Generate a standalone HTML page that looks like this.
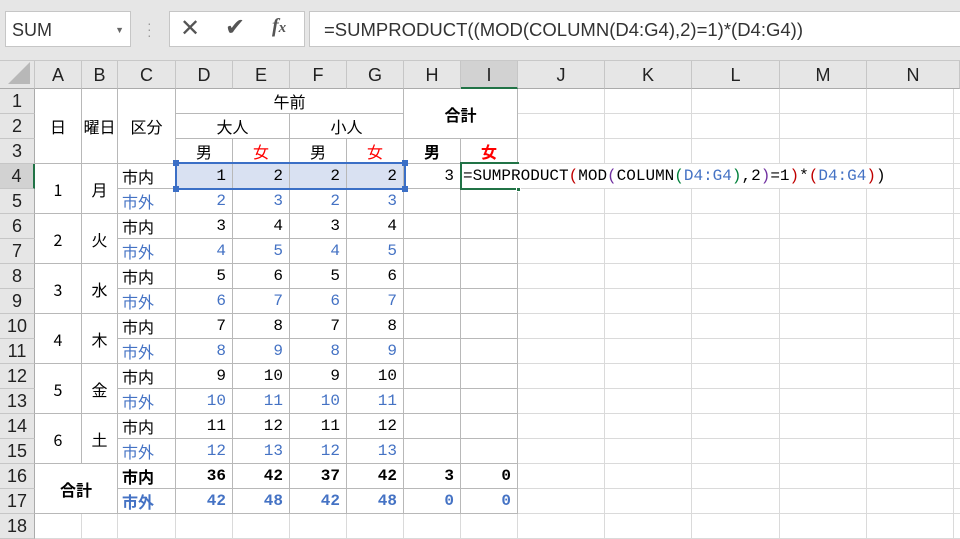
<!DOCTYPE html>
<html><head><meta charset="utf-8"><style>
*{box-sizing:border-box;margin:0;padding:0}
html,body{width:960px;height:539px;overflow:hidden}
body{background:#fff;position:relative;font-family:"Liberation Sans","Noto Sans CJK JP",sans-serif;}
.a{position:absolute}
.top{left:0;top:0;width:960px;height:61px;background:#e6e6e6;border-bottom:1px solid #c8c8c8}
.box{background:#fff;border:1px solid #c6c6c6}
.ch{position:absolute;top:61px;height:28px;background:#e6e6e6;border-right:1px solid #c6c6c6;border-bottom:1px solid #ababab;font-size:18px;color:#222;text-align:center;line-height:28px}
.rh{position:absolute;left:0;width:35px;height:25px;background:#e6e6e6;border-right:1px solid #ababab;border-bottom:1px solid #c6c6c6;font-size:18px;color:#222;text-align:center;line-height:25px}
.vl{position:absolute;top:89px;width:1px;height:450px;background:#dadada}
.vs{position:absolute;top:514px;width:1px;height:25px;background:#dadada}
.hl{position:absolute;left:35px;height:1px;width:925px;background:#dadada}
.c{position:absolute;background:#fff;border-right:1px solid #b8b8b8;border-bottom:1px solid #b8b8b8;font-family:"Noto Sans CJK JP",sans-serif;font-size:16px;line-height:24px;color:#000;white-space:nowrap}
.r{font-family:"Liberation Mono","Noto Sans CJK JP",monospace;font-size:16px}
.ctr{text-align:center}.r{text-align:right;padding-right:6px}.l{padding-left:4px}
.b{color:#4472c4}.red{color:#f00}.bd{font-weight:bold}
.sel{background:#d9e1f2}
</style></head><body>
<div class="a top"></div>
<div class="a box" style="left:5px;top:11px;width:126px;height:36px;font-size:18px;line-height:36px;padding-left:6px;color:#333">SUM<span style="position:absolute;right:6px;top:0;font-size:9px;color:#666">▼</span></div>
<div class="a" style="left:147px;top:20px;color:#999;font-size:14px;line-height:6px">·<br>·<br>·</div>
<div class="a box" style="left:169px;top:11px;width:136px;height:36px"></div>
<div class="a" style="left:180px;top:14px;font-size:24px;color:#555">✕</div>
<div class="a" style="left:225px;top:13px;font-size:24px;color:#555">✔</div>
<div class="a" style="left:272px;top:15px;font-size:20px;color:#555;font-family:'Liberation Serif',serif;font-style:italic;font-weight:bold">f<span style="font-size:15px">x</span></div>
<div class="a box" style="left:309px;top:11px;width:651px;height:36px;border-right:none;font-size:18.5px;line-height:35px;padding-left:14px;color:#333">=SUMPRODUCT((MOD(COLUMN(D4:G4),2)=1)*(D4:G4))</div>

<div class="ch" style="left:0;width:35px;background:#e6e6e6"><div class="a" style="right:4px;bottom:4px;width:0;height:0;border-left:22px solid transparent;border-bottom:22px solid #b8b8b8"></div></div>
<div class="ch" style="left:35px;width:47px">A</div>
<div class="ch" style="left:82px;width:36px">B</div>
<div class="ch" style="left:118px;width:58px">C</div>
<div class="ch" style="left:176px;width:57px">D</div>
<div class="ch" style="left:233px;width:57px">E</div>
<div class="ch" style="left:290px;width:57px">F</div>
<div class="ch" style="left:347px;width:57px">G</div>
<div class="ch" style="left:404px;width:57px">H</div>
<div class="ch" style="left:461px;width:57px;background:#d2d2d2;border-bottom:2px solid #217346">I</div>
<div class="ch" style="left:518px;width:87px">J</div>
<div class="ch" style="left:605px;width:87px">K</div>
<div class="ch" style="left:692px;width:88px">L</div>
<div class="ch" style="left:780px;width:87px">M</div>
<div class="ch" style="left:867px;width:93px">N</div>

<div class="rh" style="top:89px">1</div><div class="rh" style="top:114px">2</div><div class="rh" style="top:139px">3</div>
<div class="rh" style="top:164px;background:#d2d2d2;border-right:2px solid #217346">4</div><div class="rh" style="top:189px">5</div><div class="rh" style="top:214px">6</div>
<div class="rh" style="top:239px">7</div><div class="rh" style="top:264px">8</div><div class="rh" style="top:289px">9</div>
<div class="rh" style="top:314px">10</div><div class="rh" style="top:339px">11</div><div class="rh" style="top:364px">12</div>
<div class="rh" style="top:389px">13</div><div class="rh" style="top:414px">14</div><div class="rh" style="top:439px">15</div>
<div class="rh" style="top:464px">16</div><div class="rh" style="top:489px">17</div><div class="rh" style="top:514px">18</div>

<div class="vl" style="left:604px"></div><div class="vl" style="left:691px"></div><div class="vl" style="left:779px"></div><div class="vl" style="left:866px"></div><div class="vl" style="left:953px"></div><div class="vl" style="left:517px"></div>
<div class="vs" style="left:81px"></div><div class="vs" style="left:117px"></div><div class="vs" style="left:175px"></div><div class="vs" style="left:232px"></div><div class="vs" style="left:289px"></div><div class="vs" style="left:346px"></div><div class="vs" style="left:403px"></div><div class="vs" style="left:460px"></div>
<div class="hl" style="top:113px"></div><div class="hl" style="top:138px"></div><div class="hl" style="top:163px"></div><div class="hl" style="top:188px"></div><div class="hl" style="top:213px"></div><div class="hl" style="top:238px"></div><div class="hl" style="top:263px"></div><div class="hl" style="top:288px"></div><div class="hl" style="top:313px"></div><div class="hl" style="top:338px"></div><div class="hl" style="top:363px"></div><div class="hl" style="top:388px"></div><div class="hl" style="top:413px"></div><div class="hl" style="top:438px"></div><div class="hl" style="top:463px"></div><div class="hl" style="top:488px"></div><div class="hl" style="top:513px"></div><div class="hl" style="top:538px"></div>

<div class="c ctr" style="left:35px;top:89px;width:47px;height:75px;line-height:75px">日</div>
<div class="c ctr" style="left:82px;top:89px;width:36px;height:75px;line-height:75px">曜日</div>
<div class="c ctr" style="left:118px;top:89px;width:58px;height:75px;line-height:75px">区分</div>
<div class="c ctr" style="left:176px;top:89px;width:228px;height:25px">午前</div>
<div class="c ctr" style="left:176px;top:114px;width:114px;height:25px">大人</div>
<div class="c ctr" style="left:290px;top:114px;width:114px;height:25px">小人</div>
<div class="c ctr bd" style="left:404px;top:89px;width:114px;height:50px;line-height:50px">合計</div>
<div class="c ctr" style="left:176px;top:139px;width:57px;height:25px">男</div>
<div class="c ctr red" style="left:233px;top:139px;width:57px;height:25px">女</div>
<div class="c ctr" style="left:290px;top:139px;width:57px;height:25px">男</div>
<div class="c ctr red" style="left:347px;top:139px;width:57px;height:25px">女</div>
<div class="c ctr bd" style="left:404px;top:139px;width:57px;height:25px">男</div>
<div class="c ctr red bd" style="left:461px;top:139px;width:57px;height:25px">女</div>

<div class="c ctr" style="left:35px;top:164px;width:47px;height:50px;line-height:50px">1</div><div class="c ctr" style="left:82px;top:164px;width:36px;height:50px;line-height:50px">月</div>
<div class="c ctr" style="left:35px;top:214px;width:47px;height:50px;line-height:50px">2</div><div class="c ctr" style="left:82px;top:214px;width:36px;height:50px;line-height:50px">火</div>
<div class="c ctr" style="left:35px;top:264px;width:47px;height:50px;line-height:50px">3</div><div class="c ctr" style="left:82px;top:264px;width:36px;height:50px;line-height:50px">水</div>
<div class="c ctr" style="left:35px;top:314px;width:47px;height:50px;line-height:50px">4</div><div class="c ctr" style="left:82px;top:314px;width:36px;height:50px;line-height:50px">木</div>
<div class="c ctr" style="left:35px;top:364px;width:47px;height:50px;line-height:50px">5</div><div class="c ctr" style="left:82px;top:364px;width:36px;height:50px;line-height:50px">金</div>
<div class="c ctr" style="left:35px;top:414px;width:47px;height:50px;line-height:50px">6</div><div class="c ctr" style="left:82px;top:414px;width:36px;height:50px;line-height:50px">土</div>
<div class="c ctr bd" style="left:35px;top:464px;width:83px;height:50px;line-height:50px">合計</div>

<div class="c l" style="left:118px;top:164px;width:58px;height:25px">市内</div><div class="c r sel" style="left:176px;top:164px;width:57px;height:25px">1</div><div class="c r sel" style="left:233px;top:164px;width:57px;height:25px">2</div><div class="c r sel" style="left:290px;top:164px;width:57px;height:25px">2</div><div class="c r sel" style="left:347px;top:164px;width:57px;height:25px">2</div><div class="c r" style="left:404px;top:164px;width:57px;height:25px">3</div><div class="c" style="left:461px;top:164px;width:57px;height:25px"></div>
<div class="c l b" style="left:118px;top:189px;width:58px;height:25px">市外</div><div class="c r b" style="left:176px;top:189px;width:57px;height:25px">2</div><div class="c r b" style="left:233px;top:189px;width:57px;height:25px">3</div><div class="c r b" style="left:290px;top:189px;width:57px;height:25px">2</div><div class="c r b" style="left:347px;top:189px;width:57px;height:25px">3</div><div class="c" style="left:404px;top:189px;width:57px;height:25px"></div><div class="c" style="left:461px;top:189px;width:57px;height:25px"></div>

<div class="c l" style="left:118px;top:214px;width:58px;height:25px">市内</div><div class="c r" style="left:176px;top:214px;width:57px;height:25px">3</div><div class="c r" style="left:233px;top:214px;width:57px;height:25px">4</div><div class="c r" style="left:290px;top:214px;width:57px;height:25px">3</div><div class="c r" style="left:347px;top:214px;width:57px;height:25px">4</div><div class="c" style="left:404px;top:214px;width:57px;height:25px"></div><div class="c" style="left:461px;top:214px;width:57px;height:25px"></div>
<div class="c l b" style="left:118px;top:239px;width:58px;height:25px">市外</div><div class="c r b" style="left:176px;top:239px;width:57px;height:25px">4</div><div class="c r b" style="left:233px;top:239px;width:57px;height:25px">5</div><div class="c r b" style="left:290px;top:239px;width:57px;height:25px">4</div><div class="c r b" style="left:347px;top:239px;width:57px;height:25px">5</div><div class="c" style="left:404px;top:239px;width:57px;height:25px"></div><div class="c" style="left:461px;top:239px;width:57px;height:25px"></div>

<div class="c l" style="left:118px;top:264px;width:58px;height:25px">市内</div><div class="c r" style="left:176px;top:264px;width:57px;height:25px">5</div><div class="c r" style="left:233px;top:264px;width:57px;height:25px">6</div><div class="c r" style="left:290px;top:264px;width:57px;height:25px">5</div><div class="c r" style="left:347px;top:264px;width:57px;height:25px">6</div><div class="c" style="left:404px;top:264px;width:57px;height:25px"></div><div class="c" style="left:461px;top:264px;width:57px;height:25px"></div>
<div class="c l b" style="left:118px;top:289px;width:58px;height:25px">市外</div><div class="c r b" style="left:176px;top:289px;width:57px;height:25px">6</div><div class="c r b" style="left:233px;top:289px;width:57px;height:25px">7</div><div class="c r b" style="left:290px;top:289px;width:57px;height:25px">6</div><div class="c r b" style="left:347px;top:289px;width:57px;height:25px">7</div><div class="c" style="left:404px;top:289px;width:57px;height:25px"></div><div class="c" style="left:461px;top:289px;width:57px;height:25px"></div>

<div class="c l" style="left:118px;top:314px;width:58px;height:25px">市内</div><div class="c r" style="left:176px;top:314px;width:57px;height:25px">7</div><div class="c r" style="left:233px;top:314px;width:57px;height:25px">8</div><div class="c r" style="left:290px;top:314px;width:57px;height:25px">7</div><div class="c r" style="left:347px;top:314px;width:57px;height:25px">8</div><div class="c" style="left:404px;top:314px;width:57px;height:25px"></div><div class="c" style="left:461px;top:314px;width:57px;height:25px"></div>
<div class="c l b" style="left:118px;top:339px;width:58px;height:25px">市外</div><div class="c r b" style="left:176px;top:339px;width:57px;height:25px">8</div><div class="c r b" style="left:233px;top:339px;width:57px;height:25px">9</div><div class="c r b" style="left:290px;top:339px;width:57px;height:25px">8</div><div class="c r b" style="left:347px;top:339px;width:57px;height:25px">9</div><div class="c" style="left:404px;top:339px;width:57px;height:25px"></div><div class="c" style="left:461px;top:339px;width:57px;height:25px"></div>

<div class="c l" style="left:118px;top:364px;width:58px;height:25px">市内</div><div class="c r" style="left:176px;top:364px;width:57px;height:25px">9</div><div class="c r" style="left:233px;top:364px;width:57px;height:25px">10</div><div class="c r" style="left:290px;top:364px;width:57px;height:25px">9</div><div class="c r" style="left:347px;top:364px;width:57px;height:25px">10</div><div class="c" style="left:404px;top:364px;width:57px;height:25px"></div><div class="c" style="left:461px;top:364px;width:57px;height:25px"></div>
<div class="c l b" style="left:118px;top:389px;width:58px;height:25px">市外</div><div class="c r b" style="left:176px;top:389px;width:57px;height:25px">10</div><div class="c r b" style="left:233px;top:389px;width:57px;height:25px">11</div><div class="c r b" style="left:290px;top:389px;width:57px;height:25px">10</div><div class="c r b" style="left:347px;top:389px;width:57px;height:25px">11</div><div class="c" style="left:404px;top:389px;width:57px;height:25px"></div><div class="c" style="left:461px;top:389px;width:57px;height:25px"></div>

<div class="c l" style="left:118px;top:414px;width:58px;height:25px">市内</div><div class="c r" style="left:176px;top:414px;width:57px;height:25px">11</div><div class="c r" style="left:233px;top:414px;width:57px;height:25px">12</div><div class="c r" style="left:290px;top:414px;width:57px;height:25px">11</div><div class="c r" style="left:347px;top:414px;width:57px;height:25px">12</div><div class="c" style="left:404px;top:414px;width:57px;height:25px"></div><div class="c" style="left:461px;top:414px;width:57px;height:25px"></div>
<div class="c l b" style="left:118px;top:439px;width:58px;height:25px">市外</div><div class="c r b" style="left:176px;top:439px;width:57px;height:25px">12</div><div class="c r b" style="left:233px;top:439px;width:57px;height:25px">13</div><div class="c r b" style="left:290px;top:439px;width:57px;height:25px">12</div><div class="c r b" style="left:347px;top:439px;width:57px;height:25px">13</div><div class="c" style="left:404px;top:439px;width:57px;height:25px"></div><div class="c" style="left:461px;top:439px;width:57px;height:25px"></div>

<div class="c l bd" style="left:118px;top:464px;width:58px;height:25px">市内</div><div class="c r bd" style="left:176px;top:464px;width:57px;height:25px">36</div><div class="c r bd" style="left:233px;top:464px;width:57px;height:25px">42</div><div class="c r bd" style="left:290px;top:464px;width:57px;height:25px">37</div><div class="c r bd" style="left:347px;top:464px;width:57px;height:25px">42</div><div class="c r bd" style="left:404px;top:464px;width:57px;height:25px">3</div><div class="c r bd" style="left:461px;top:464px;width:57px;height:25px">0</div>
<div class="c l bd b" style="left:118px;top:489px;width:58px;height:25px">市外</div><div class="c r bd b" style="left:176px;top:489px;width:57px;height:25px">42</div><div class="c r bd b" style="left:233px;top:489px;width:57px;height:25px">48</div><div class="c r bd b" style="left:290px;top:489px;width:57px;height:25px">42</div><div class="c r bd b" style="left:347px;top:489px;width:57px;height:25px">48</div><div class="c r bd b" style="left:404px;top:489px;width:57px;height:25px">0</div><div class="c r bd b" style="left:461px;top:489px;width:57px;height:25px">0</div>

<div class="a" style="left:175px;top:162px;width:231px;height:28px;border:2px solid #3b6fc6"></div>
<div class="a" style="left:173px;top:160px;width:6px;height:6px;background:#3b6fc6"></div>
<div class="a" style="left:402px;top:160px;width:6px;height:6px;background:#3b6fc6"></div>
<div class="a" style="left:173px;top:186px;width:6px;height:6px;background:#3b6fc6"></div>
<div class="a" style="left:402px;top:186px;width:6px;height:6px;background:#3b6fc6"></div>
<div class="a" style="left:460px;top:162px;width:59px;height:28px;border:2px solid #217346"></div>
<div class="a" style="left:516px;top:187px;width:5px;height:5px;background:#217346;border:1px solid #fff"></div>
<div class="a" style="left:463px;top:164px;height:24px;line-height:24px;font-family:'Liberation Mono',monospace;font-size:16px;white-space:nowrap;background:#fff;padding-right:2px">=SUMPRODUCT<span style="color:#c00000">(</span>MOD<span style="color:#7030a0">(</span>COLUMN<span style="color:#00803a">(</span><span style="color:#4472c4">D4:G4</span><span style="color:#00803a">)</span>,2<span style="color:#7030a0">)</span>=1<span style="color:#c00000">)</span>*<span style="color:#c00000">(</span><span style="color:#4472c4">D4:G4</span><span style="color:#c00000">)</span>)</div>
</body></html>
